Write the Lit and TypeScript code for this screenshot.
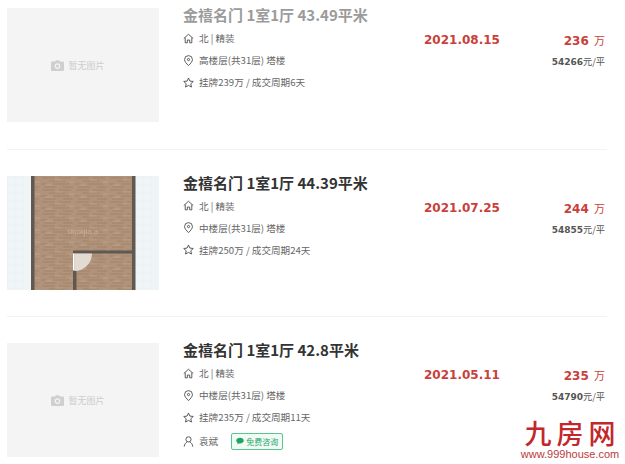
import { LitElement, html, css, svg } from "lit";
import { customElement } from "lit/decorators.js";

const ICONS = {
  home: svg`<path d="M1 7 7 1.600 13 7M2.800 5.800V12.500H5.500V9H8.500V12.500H11.200V5.800" />`,
  pin: svg`<path d="M7 13.500C4.200 10.700 2 8.400 2 5.800a5 5 0 0 1 10 0C12 8.400 9.800 10.700 7 13.500Z" /><circle cx="7" cy="5.800" r="1.400" />`,
  star: svg`<path d="m7 1.300 1.800 3.900 4.300.5-3.200 2.900.9 4.200L7 10.700l-3.800 2.100.9-4.200-3.200-2.900 4.300-.5Z" />`,
  user: svg`<circle cx="7" cy="4.300" r="3.300" /><path d="M1.500 13.500c.4-3.300 2.500-5.500 3.900-5.900M12.500 13.500c-.4-3.300-2.500-5.500-3.900-5.900" />`,
};

interface Row {
  title: string;
  floor: string;
  deal: string;
  date: string;
  price: string;
  unit: string;
  image: "none" | "plan";
  faded?: boolean;
  agent?: string;
}

const ROWS: Row[] = [
  { title: "金禧名门 1室1厅 43.49平米", floor: "高楼层(共31层) 塔楼", deal: "挂牌239万 / 成交周期6天", date: "2021.08.15", price: "236", unit: "54266", image: "none", faded: true },
  { title: "金禧名门 1室1厅 44.39平米", floor: "中楼层(共31层) 塔楼", deal: "挂牌250万 / 成交周期24天", date: "2021.07.25", price: "244", unit: "54855", image: "plan" },
  { title: "金禧名门 1室1厅 42.8平米", floor: "中楼层(共31层) 塔楼", deal: "挂牌235万 / 成交周期11天", date: "2021.05.11", price: "235", unit: "54790", image: "none", agent: "袁斌" },
];

@customElement("app-root")
export class AppRoot extends LitElement {
  static styles = css`
    :host {
      display: block;
      width: 625px;
      height: 464px;
      overflow: hidden;
      position: relative;
      background: #fff;
      font-family: "Noto Sans CJK SC", "Open Sans", sans-serif;
      color: #333;
    }
    .list { display: flex; flex-direction: column; width: 600px; margin-left: 7px; padding-top: 8px; }
    .row {
      display: grid;
      grid-template-columns: 152px 24px 241px 100px 1fr;
      height: 114px;
      padding-bottom: 26.500px;
      margin-bottom: 26px;
      border-bottom: 1px solid #f3f3f3;
    }
    .row:last-child { border-bottom: none; }
    .thumb { grid-column: 1; width: 152px; height: 114px; display: block; }
    .empty {
      background: #f4f4f4;
      display: flex;
      align-items: center;
      justify-content: center;
      gap: 4px;
      padding-right: 10px;
      box-sizing: border-box;
      font-size: 9px;
      color: #cdcdcd;
    }
    .empty svg { width: 13px; height: 11px; fill: #cfcfcf; }
    .plan { filter: blur(0.35px); }
    .info { grid-column: 3; display: flex; flex-direction: column; min-width: 0; }
    .title {
      font-size: 15px;
      font-weight: 700;
      line-height: 16px;
      color: #333;
      margin: -1px 0 4px;
      white-space: nowrap;
    }
    .faded .title { color: #9b9b9b; }
    .line {
      display: flex;
      align-items: center;
      height: 22px;
      font-size: 9.600px;
      color: #666;
      white-space: nowrap;
    }
    .line svg {
      width: 11px;
      height: 11px;
      margin-right: 5px;
      fill: none;
      stroke: #444;
      stroke-width: 1.100;
      flex: none;
    }
    .agent { margin-top: 2px; }
    .chat {
      display: inline-flex;
      align-items: center;
      gap: 2px;
      margin-left: 13px;
      padding: 0 4px;
      height: 15px;
      border: 1px solid #5cc48f;
      border-radius: 2px;
      background: #f1fbf6;
      color: #29a86a;
      font-size: 8px;
    }
    .chat svg { width: 8px; height: 8px; margin: 0; fill: #1fa463; stroke: none; }
    .date {
      grid-column: 4;
      padding-top: 23px;
      font-family: "DejaVu Sans", sans-serif;
      font-size: 12px;
      font-weight: 700;
      line-height: 18px;
      color: #c9403a;
      white-space: nowrap;
    }
    .deal { grid-column: 5; display: flex; flex-direction: column; align-items: flex-end; padding: 23px 2px 0 0; }
    .price {
      font-family: "DejaVu Sans", sans-serif;
      font-size: 12px;
      font-weight: 700;
      line-height: 18px;
      color: #c9403a;
    }
    .price span { font-family: "Noto Sans CJK SC", sans-serif; font-size: 11px; font-weight: 400; margin-left: 1px; }
    .per {
      margin-top: 4px;
      font-family: "DejaVu Sans", sans-serif;
      font-size: 9px;
      font-weight: 700;
      line-height: 14px;
      color: #555;
      white-space: nowrap;
    }
    .per span { font-family: "Noto Sans CJK SC", sans-serif; font-weight: 400; font-size: 9.200px; }
    .logo {
      position: absolute;
      right: 5px;
      bottom: 3px;
      width: 100px;
      display: flex;
      flex-direction: column;
      align-items: center;
      gap: 2px;
      color: #c3272b;
    }
    .logo b { font-size: 27px; font-weight: 500; line-height: 27px; letter-spacing: 5px; margin-right: -5px; }
    .logo i { font: normal 11px/13px "Liberation Sans", sans-serif; color: #b93a40; white-space: nowrap; }
  `;

  private thumb(r: Row) {
    if (r.image === "plan") return this.plan();
    return html`<div class="thumb empty">
      <svg viewBox="0 0 13 11"><path fill-rule="evenodd" d="M1 1.500h3L5 .3h3l1 1.200h3a1 1 0 0 1 1 1V10a1 1 0 0 1-1 1H1a1 1 0 0 1-1-1V2.500a1 1 0 0 1 1-1Zm5.500 1.800a2.800 2.800 0 1 0 0 5.600 2.800 2.800 0 0 0 0-5.600Zm0 1.200a1.600 1.600 0 1 1 0 3.200 1.600 1.600 0 0 1 0-3.200Z" /></svg>
      暂无图片
    </div>`;
  }

  private plan() {
    return html`<svg class="thumb plan" viewBox="0 0 152 114">
      <defs>
        <pattern id="tile" width="8" height="8" patternUnits="userSpaceOnUse">
          <rect width="8" height="8" fill="#eff4f6" />
          <path d="M8 0H0V8" fill="none" stroke="#e7eef0" stroke-width=".5" />
        </pattern>
        <pattern id="wood" width="34" height="12" patternUnits="userSpaceOnUse">
          <rect width="34" height="12" fill="#b0937a" />
          <path d="M1 2h13M18 2h12M8 5h16M0 8h6M12 8h16M22 11h10M3 11h12" stroke="#a3836a" stroke-width="1" />
          <path d="M14 4h8M28 6h5M4 9h7" stroke="#bca287" stroke-width="1" />
        </pattern>
      </defs>
      <rect width="152" height="114" fill="url(#tile)" />
      <rect x="24" width="104" height="114" fill="url(#wood)" />
      <rect x="24" width="3.500" height="114" fill="#5f5952" />
      <rect x="125" width="3.500" height="114" fill="#5f5952" />
      <rect x="66" y="74.500" width="60" height="3" fill="#5f5952" />
      <rect x="66" y="94" width="3.500" height="20" fill="#5f5952" />
      <rect x="66" y="77.500" width="1.500" height="17" fill="#fff" />
      <path d="M67.500 77.500h17.500a17.500 17.500 0 0 1-17.500 17.500Z" fill="#e2dbd3" />
      <text x="76" y="58" text-anchor="middle" font-family="Liberation Sans" font-size="8" fill="#c6ae96">uoorjia.a</text>
    </svg>`;
  }

  render() {
    return html`
      <div class="list">
        ${ROWS.map(
          (r) => html`<div class="row ${r.faded ? "faded" : ""}">
            ${this.thumb(r)}
            <div class="info">
              <div class="title">${r.title}</div>
              <div class="line"><svg viewBox="0 0 14 14">${ICONS.home}</svg>北 | 精装</div>
              <div class="line"><svg viewBox="0 0 14 14">${ICONS.pin}</svg>${r.floor}</div>
              <div class="line"><svg viewBox="0 0 14 14">${ICONS.star}</svg>${r.deal}</div>
              ${r.agent
                ? html`<div class="line agent">
                    <svg viewBox="0 0 14 14">${ICONS.user}</svg>${r.agent}
                    <span class="chat"><svg viewBox="0 0 10 10"><path d="M5 .8c2.600 0 4.700 1.600 4.700 3.700S7.600 8.200 5 8.200c-.5 0-1 0-1.500-.2L1.700 9.200l.3-1.800C1 6.700.3 5.700.3 4.500.3 2.400 2.400.8 5 .8Z" /></svg>免费咨询</span>
                  </div>`
                : ""}
            </div>
            <div class="date">${r.date}</div>
            <div class="deal">
              <div class="price">${r.price} <span>万</span></div>
              <div class="per">${r.unit}<span>元/平</span></div>
            </div>
          </div>`
        )}
      </div>
      <div class="logo"><b>九房网</b><i>www.999house.com</i></div>
    `;
  }
}
